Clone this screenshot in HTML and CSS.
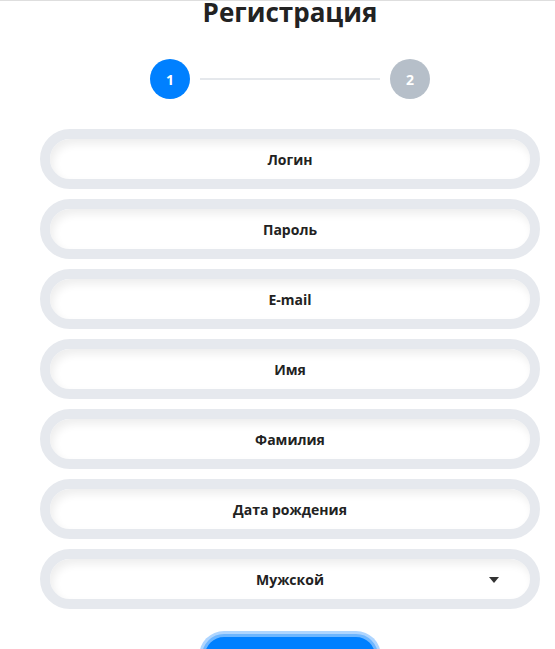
FILE: index.html
```html
<!DOCTYPE html>
<html lang="ru">
<head>
  <meta charset="UTF-8">
  <meta name="viewport" content="width=device-width, initial-scale=1.0">
  <title>Регистрация</title>
  <link rel="stylesheet" href="styles.css">
</head>
<body>

<div class="topLine"></div>

<div class="regForm">
  <h1>Регистрация</h1>

  <div class="steps">
    <span class="step active">1</span>
    <span class="stepLine"></span>
    <span class="step">2</span>
  </div>

  <div class="field"><input type="text" placeholder="Логин"></div>
  <div class="field"><input type="password" placeholder="Пароль"></div>
  <div class="field"><input type="email" placeholder="E-mail"></div>
  <div class="field"><input type="text" placeholder="Имя"></div>
  <div class="field"><input type="text" placeholder="Фамилия"></div>
  <div class="field"><input type="text" placeholder="Дата рождения"></div>
  <div class="field selectField">
    <select>
      <option>Мужской</option>
      <option>Женский</option>
    </select>
    <span class="arrow"></span>
  </div>

  <button class="nextBtn">Далее</button>
</div>

</body>
</html>
```

FILE: styles.css
```css
html, body {
  margin: 0;
  padding: 0;
  background: #fff;
  font-family: "Open Sans", Arial, sans-serif;
  color: #222;
  overflow: hidden;
}
.topLine {
  height: 1px;
  background: #dedede;
  margin-bottom: -1px;
  position: relative;
}
.regForm {
  width: 500px;
  margin-left: 40px;
  display: flex;
  flex-direction: column;
  align-items: center;
}
h1 {
  margin: 0;
  font-size: 26px;
  line-height: 24px;
  font-weight: 700;
  color: #222;
}
.steps {
  display: flex;
  align-items: center;
  gap: 10px;
  margin-top: 35px;
}
.step {
  width: 40px;
  height: 40px;
  border-radius: 50%;
  background: #b6bfc9;
  color: #fff;
  font-size: 14px;
  font-weight: 700;
  display: flex;
  align-items: center;
  justify-content: center;
}
.step.active {
  background: #0080ff;
}
.stepLine {
  width: 180px;
  height: 2px;
  background: #e5e8ec;
}
.field {
  position: relative;
  width: 500px;
  height: 60px;
  box-sizing: border-box;
  border: 10px solid #e6e9ee;
  border-radius: 30px;
  background: #fff;
  box-shadow: inset 3px 5px 8px rgba(0, 0, 0, 0.07);
  margin-top: 10px;
}
.steps + .field {
  margin-top: 30px;
}
.field input,
.field select {
  width: 100%;
  height: 100%;
  border: none;
  outline: none;
  background: transparent;
  text-align: center;
  font-family: "Open Sans", Arial, sans-serif;
  font-size: 14px;
  font-weight: 700;
  color: #222;
  padding: 0;
  appearance: none;
  -webkit-appearance: none;
}
.field input::placeholder {
  color: #222;
  opacity: 1;
}
.field select {
  text-align-last: center;
}
.arrow {
  position: absolute;
  right: 31px;
  top: 18px;
  width: 0;
  height: 0;
  border-left: 5px solid transparent;
  border-right: 5px solid transparent;
  border-top: 6px solid #333;
  pointer-events: none;
}
.nextBtn {
  margin-top: 25px;
  width: 158px;
  height: 44px;
  border: 3px solid #6db6ff;
  border-radius: 22px;
  box-shadow: 0 0 0 3px #aed5ff;
  background: #0080ff;
  color: #fff;
  font-family: "Open Sans", Arial, sans-serif;
  font-size: 14px;
  font-weight: 700;
  box-sizing: content-box;
}
```
